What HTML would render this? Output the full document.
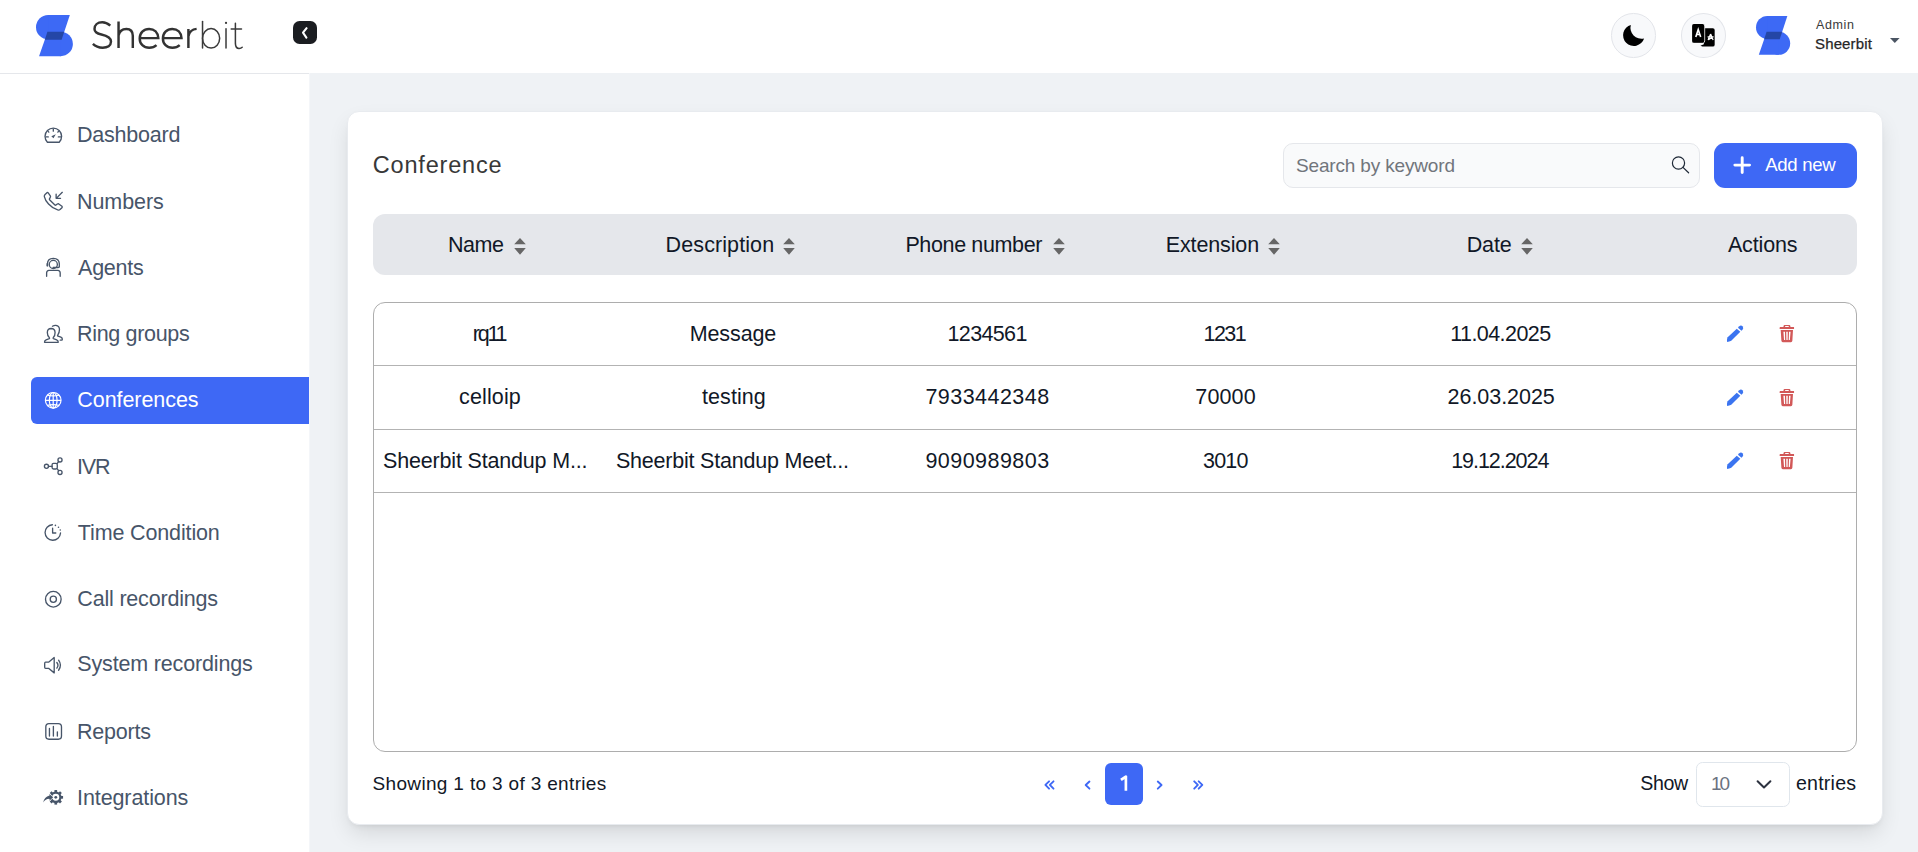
<!DOCTYPE html>
<html><head><meta charset="utf-8"><style>
*{box-sizing:border-box;margin:0;padding:0}
html,body{width:1918px;height:852px;overflow:hidden;background:#eff2f5;font-family:"Liberation Sans",sans-serif}
.a{position:absolute;display:block;overflow:visible}
.t{position:absolute;white-space:nowrap}
.b{position:absolute}
</style></head><body>
<div class="b" style="left:0;top:0;width:1918px;height:73px;background:#fff"></div>
<div class="b" style="left:0;top:73px;width:309px;height:779px;background:#fff;border-top:1px solid #e5e7eb"></div>
<div class="b" style="left:309px;top:73px;width:1px;height:779px;background:#f4f6f9"></div>
<div class="b" style="left:31px;top:377px;width:278px;height:46.6px;background:#3e68f5;border-radius:6px 0 0 6px"></div>
<svg class="a" style="left:36.1px;top:15.2px;width:36.9px;height:41.2px" viewBox="100 85 605 675" preserveAspectRatio="none"><circle cx="300" cy="285" r="200" fill="#3d69f5"/><polygon points="300,85 655,85 520,490 300,490" fill="#3d69f5"/>
<circle cx="505" cy="560" r="200" fill="#3d69f5"/><polygon points="290,360 505,360 505,760 150,760" fill="#3d69f5"/>
<polygon points="287,360 563,360 520,490 245,490" fill="#2446a6"/></svg>
<svg class="a" style="left:1755.8px;top:15.8px;width:34.2px;height:38.8px" viewBox="100 85 605 675" preserveAspectRatio="none"><circle cx="300" cy="285" r="200" fill="#3d69f5"/><polygon points="300,85 655,85 520,490 300,490" fill="#3d69f5"/>
<circle cx="505" cy="560" r="200" fill="#3d69f5"/><polygon points="290,360 505,360 505,760 150,760" fill="#3d69f5"/>
<polygon points="287,360 563,360 520,490 245,490" fill="#2446a6"/></svg>
<svg class="a" style="left:88px;top:16px;width:112px;height:38px" viewBox="88 16 112 38"><g fill="none" stroke="#333" stroke-width="2.45"><path d="M110.3,25.6 C107.5,23.2 104.8,22.2 102.3,22.2 C97.5,22.2 94.5,25 94.5,28.9 C94.5,32.6 97.6,33.6 101.4,34.5 C106.2,35.6 111,37.2 111,41.6 C111,45.6 107.5,47.7 102.7,47.7 C98.6,47.7 95.2,46.2 92.9,43.9"/><path d="M118.55,21.6 V47.9 M118.55,35.5 C119.3,31.3 122.5,28.9 126.4,28.9 C130.6,28.9 132.8,31.6 132.8,35.8 V47.9"/><path d="M139.9,38.1 H158.3 C158,32.6 154.4,28.9 149.1,28.9 C143.6,28.9 139.7,33 139.7,38.4 C139.7,44 143.6,47.8 149.2,47.8 C152.3,47.8 154.8,46.8 156.5,45.2"/><path d="M163.1,38.1 H181.5 C181.2,32.6 177.6,28.9 172.3,28.9 C166.8,28.9 162.9,33 162.9,38.4 C162.9,44 166.8,47.8 172.4,47.8 C175.5,47.8 178,46.8 179.7,45.2"/><path d="M188.4,28.9 V47.9 M188.4,36.2 C189.4,31.6 192.4,29.3 196.6,28.9"/></g></svg>
<svg class="a" style="left:180px;top:15px;width:70px;height:40px;" viewBox="0 0 1491 852"><g fill="none" stroke="#3a3a3a" stroke-width="32" stroke-linecap="round"><path d="M480,140 V705"/><ellipse cx="662" cy="497" rx="183" ry="208"/><path d="M980,295 V705"/><path d="M1180,175 V610 Q1185,715 1260,712 Q1300,710 1325,688"/><path d="M1090,300 H1310"/></g><circle cx="980" cy="168" r="24" fill="#3a3a3a"/></svg>
<div class="b" style="left:292.9px;top:20.9px;width:24px;height:23.4px;background:#1b1d21;border-radius:6.5px"></div>
<svg class="a" style="left:292px;top:20px;width:25px;height:25px;" viewBox="0 0 25 25"><path d="M14.6,8.2 L11,12.7 L14.4,17.6" fill="none" stroke="#fff" stroke-width="2.1" stroke-linecap="round" stroke-linejoin="round"/></svg>
<div class="b" style="left:1611.4px;top:13.1px;width:44.6px;height:44.6px;border-radius:50%;background:#f8f9fb;border:1px solid #e3e5ea"></div>
<div class="b" style="left:1681.1px;top:13.1px;width:45.2px;height:44.6px;border-radius:50%;background:#f8f9fb;border:1px solid #e3e5ea"></div>
<svg class="a" style="left:1608px;top:10px;width:120px;height:50px;" viewBox="0 0 1918 799"><path d="M365,238 A172,172 0 1,0 577,455 A176,176 0 0,1 365,238 Z" fill="#000"/><path d="M1538,290 H1675 Q1705,290 1705,320 V555 Q1705,585 1675,585 H1545 L1510,585 L1478,572 L1532,548 Z" fill="#000"/><rect x="1345" y="225" width="200" height="300" rx="30" fill="#000" stroke="#fff" stroke-width="14"/><rect x="1345" y="225" width="192" height="300" rx="30" fill="#000"/><path d="M1403,430 L1442,312 L1481,430 M1418,392 H1466" fill="none" stroke="#fff" stroke-width="26"/><path d="M1640,385 L1600,478 M1640,385 L1680,478 M1592,430 H1688 M1605,475 L1680,428" stroke="#fff" stroke-width="20" fill="none"/></svg>
<svg class="a" style="left:1889px;top:37px;width:12px;height:7px;" viewBox="0 0 12 7"><path d="M1,0.9 H10.6 L5.8,5.9 Z" fill="#4b5563"/></svg>
<div class="b" style="left:347px;top:110.6px;width:1535.9px;height:714.6px;background:#fff;border-radius:12px;border:1px solid #e8ebef;box-shadow:0 10px 22px -3px rgba(0,0,0,0.12),0 4px 6px -4px rgba(0,0,0,0.1)"></div>
<div class="b" style="left:1283.3px;top:143.3px;width:417.2px;height:44.6px;background:#f9fafb;border:1px solid #e5e7eb;border-radius:10px"></div>
<svg class="a" style="left:1668px;top:152px;width:24px;height:24px;" viewBox="0 0 24 24"><g fill="none" stroke="#1f2937" stroke-width="1.2" stroke-linecap="round"><circle cx="10.5" cy="11" r="6.1"/><path d="M15,15.4 L20.6,20.8"/></g></svg>
<div class="b" style="left:1713.8px;top:143.3px;width:142.9px;height:44.6px;background:#3e68f5;border-radius:11px"></div>
<svg class="a" style="left:1730px;top:152px;width:26px;height:26px;" viewBox="0 0 26 26"><path d="M12.2,5.75 V20.45 M4.85,13.1 H19.55" stroke="#fff" stroke-width="2.9" stroke-linecap="round"/></svg>
<div class="b" style="left:373px;top:214px;width:1484px;height:60.5px;background:#e5e7eb;border-radius:12px"></div>
<svg class="a" style="left:513.5px;top:236px;width:12px;height:20px;" viewBox="0 0 12 20"><path d="M0.2,8.3 L6,2 L11.8,8.3 Z M0.2,11.9 L6,18.7 L11.8,11.9 Z" fill="#666"/></svg>
<svg class="a" style="left:783.4px;top:236px;width:12px;height:20px;" viewBox="0 0 12 20"><path d="M0.2,8.3 L6,2 L11.8,8.3 Z M0.2,11.9 L6,18.7 L11.8,11.9 Z" fill="#666"/></svg>
<svg class="a" style="left:1053px;top:236px;width:12px;height:20px;" viewBox="0 0 12 20"><path d="M0.2,8.3 L6,2 L11.8,8.3 Z M0.2,11.9 L6,18.7 L11.8,11.9 Z" fill="#666"/></svg>
<svg class="a" style="left:1268.4px;top:236px;width:12px;height:20px;" viewBox="0 0 12 20"><path d="M0.2,8.3 L6,2 L11.8,8.3 Z M0.2,11.9 L6,18.7 L11.8,11.9 Z" fill="#666"/></svg>
<svg class="a" style="left:1521.1px;top:236px;width:12px;height:20px;" viewBox="0 0 12 20"><path d="M0.2,8.3 L6,2 L11.8,8.3 Z M0.2,11.9 L6,18.7 L11.8,11.9 Z" fill="#666"/></svg>
<div class="b" style="left:373.2px;top:301.8px;width:1484px;height:450.5px;border:1px solid #adadad;border-radius:12px"></div>
<div class="b" style="left:374px;top:364.8px;width:1482px;height:1px;background:#b3b3b3"></div>
<div class="b" style="left:374px;top:428.8px;width:1482px;height:1px;background:#b3b3b3"></div>
<div class="b" style="left:374px;top:492.3px;width:1482px;height:1px;background:#b3b3b3"></div>
<svg class="a" style="left:1720px;top:318px;width:80px;height:32px;" viewBox="0 0 1918 767"><g fill="#3b74f0"><path d="M178,468 L402,255 L487,332 L270,548 Q225,572 170,578 Q160,525 178,468 Z"/><path d="M430,232 L515,308 L540,283 Q572,248 545,205 Q505,160 462,195 Z"/></g><g fill="#d25858"><path d="M1545,165 H1665 Q1690,168 1690,215 H1770 Q1780,220 1775,262 H1430 Q1425,220 1440,215 H1520 Q1520,168 1545,165 Z M1562,190 V215 H1648 V190 Z" fill-rule="evenodd"/><path d="M1455,290 H1750 L1735,545 Q1732,580 1700,580 H1505 Q1475,580 1472,545 Z M1520,330 H1558 L1562,525 H1535 Z M1588,330 H1625 L1622,525 H1592 Z M1655,330 H1692 L1675,525 H1648 Z" fill-rule="evenodd"/></g></svg>
<svg class="a" style="left:1720px;top:382px;width:80px;height:32px;" viewBox="0 0 1918 767"><g fill="#3b74f0"><path d="M178,468 L402,255 L487,332 L270,548 Q225,572 170,578 Q160,525 178,468 Z"/><path d="M430,232 L515,308 L540,283 Q572,248 545,205 Q505,160 462,195 Z"/></g><g fill="#d25858"><path d="M1545,165 H1665 Q1690,168 1690,215 H1770 Q1780,220 1775,262 H1430 Q1425,220 1440,215 H1520 Q1520,168 1545,165 Z M1562,190 V215 H1648 V190 Z" fill-rule="evenodd"/><path d="M1455,290 H1750 L1735,545 Q1732,580 1700,580 H1505 Q1475,580 1472,545 Z M1520,330 H1558 L1562,525 H1535 Z M1588,330 H1625 L1622,525 H1592 Z M1655,330 H1692 L1675,525 H1648 Z" fill-rule="evenodd"/></g></svg>
<svg class="a" style="left:1720px;top:445px;width:80px;height:32px;" viewBox="0 0 1918 767"><g fill="#3b74f0"><path d="M178,468 L402,255 L487,332 L270,548 Q225,572 170,578 Q160,525 178,468 Z"/><path d="M430,232 L515,308 L540,283 Q572,248 545,205 Q505,160 462,195 Z"/></g><g fill="#d25858"><path d="M1545,165 H1665 Q1690,168 1690,215 H1770 Q1780,220 1775,262 H1430 Q1425,220 1440,215 H1520 Q1520,168 1545,165 Z M1562,190 V215 H1648 V190 Z" fill-rule="evenodd"/><path d="M1455,290 H1750 L1735,545 Q1732,580 1700,580 H1505 Q1475,580 1472,545 Z M1520,330 H1558 L1562,525 H1535 Z M1588,330 H1625 L1622,525 H1592 Z M1655,330 H1692 L1675,525 H1648 Z" fill-rule="evenodd"/></g></svg>
<div class="b" style="left:1105px;top:762.9px;width:38px;height:42.1px;background:#3e68f5;border-radius:6px"></div>
<svg class="a" style="left:1030px;top:755px;width:190px;height:60px;" viewBox="0 0 1918 606"><g fill="none" stroke="#3e68f5" stroke-width="19" stroke-linecap="round" stroke-linejoin="round"><path d="M192,266 L155,302 L192,340 M237,266 L200,302 L237,340"/><path d="M600,268 L562,303 L600,340"/><path d="M1290,268 L1328,303 L1290,340"/><path d="M1658,266 L1695,302 L1658,340 M1703,266 L1740,302 L1703,340"/></g><path d="M918,252 L968,218 V360" fill="none" stroke="#fff" stroke-width="27" stroke-linejoin="round"/></svg>
<div class="b" style="left:1696.2px;top:762.2px;width:94px;height:45px;background:#fff;border:1px solid #e0e6ec;border-radius:6.5px"></div>
<svg class="a" style="left:1754px;top:776px;width:20px;height:16px;" viewBox="0 0 20 16"><path d="M3.6,5.2 L10,11.5 L16.4,5.2" fill="none" stroke="#2d3340" stroke-width="2" stroke-linecap="round" stroke-linejoin="round"/></svg>
<svg class="a" style="left:38px;top:120px;width:30px;height:30px;" viewBox="0 0 852 852"><g fill="none" stroke="#475569" stroke-width="38" stroke-linecap="round" stroke-linejoin="round"><path d="M267,631 A236,236 0 1,1 603,631 Z"/><path d="M435,258 V318 M228,480 H292 M578,480 H642 M288,322 L306,344 M582,322 L564,344"/></g><path d="M378,462 L505,402 L440,520 Z" fill="#475569"/></svg>
<svg class="a" style="left:38px;top:186px;width:30px;height:30px;" viewBox="0 0 852 852"><g fill="none" stroke="#475569" stroke-width="38" stroke-linecap="round" stroke-linejoin="round"><path d="M200,240 L255,190 Q275,178 290,198 L350,280 Q365,305 345,330 L325,365 Q318,385 335,400 L480,540 Q495,552 515,535 L550,512 Q570,500 590,510 L680,575 Q700,595 680,615 L625,670 Q600,690 560,680 Q420,640 300,510 Q200,400 180,300 Q175,265 200,240 Z"/><path d="M690,180 L525,345 M515,235 V350 H640"/></g></svg>
<svg class="a" style="left:38px;top:252px;width:30px;height:30px;" viewBox="0 0 852 852"><g fill="none" stroke="#475569" stroke-width="38" stroke-linecap="round" stroke-linejoin="round" stroke-width="34"><circle cx="435" cy="355" r="115"/><path d="M270,395 V330 Q270,185 435,180 Q600,185 605,330 V420 Q600,440 560,440 H430"/><path d="M245,690 V590 Q250,525 310,520 H565 Q625,525 630,590 V690"/></g><rect x="232" y="318" width="50" height="90" rx="10" fill="#475569" opacity="0.6"/></svg>
<svg class="a" style="left:38px;top:318px;width:30px;height:30px;" viewBox="0 0 852 852"><g fill="none" stroke="#475569" stroke-width="38" stroke-linecap="round" stroke-linejoin="round" stroke-width="34"><path d="M185,690 Q180,640 230,620 L320,585 Q335,575 320,555 Q265,505 265,410 Q265,300 375,298 Q480,300 485,410 Q485,505 435,555 Q420,575 440,585 L530,620 Q580,640 575,690 Z"/><path d="M410,235 Q460,205 510,210 Q610,225 610,330 Q610,420 560,485 Q545,505 570,515 L650,545 Q700,570 690,615 Q680,635 630,628"/></g></svg>
<svg class="a" style="left:38px;top:385px;width:30px;height:30px;" viewBox="0 0 852 852"><g fill="none" stroke="#fff" stroke-width="34"><circle cx="432" cy="435" r="222"/><path d="M210,435 H654 M432,213 V657"/><ellipse cx="432" cy="435" rx="110" ry="222"/><path d="M265,290 Q432,330 600,290 M265,580 Q432,540 600,580"/></g></svg>
<svg class="a" style="left:38px;top:451px;width:30px;height:30px;" viewBox="0 0 852 852"><g fill="none" stroke="#475569" stroke-width="38" stroke-linecap="round" stroke-linejoin="round" stroke-width="40"><circle cx="240" cy="435" r="58"/><rect x="400" y="350" width="148" height="160" rx="40"/><circle cx="625" cy="255" r="58"/><circle cx="625" cy="610" r="58"/><path d="M298,435 H400 M548,350 L585,300 M548,510 L585,560"/></g></svg>
<svg class="a" style="left:38px;top:517px;width:30px;height:30px;" viewBox="0 0 852 852"><g fill="none" stroke="#475569" stroke-width="38" stroke-linecap="round" stroke-linejoin="round" stroke-width="40"><path d="M408,220 A220,220 0 1,0 640,455"/><path d="M415,320 V455 H505"/></g><circle cx="495" cy="238" r="22" fill="#475569"/><circle cx="582" cy="290" r="22" fill="#475569"/><circle cx="632" cy="368" r="22" fill="#475569"/></svg>
<svg class="a" style="left:38px;top:583px;width:30px;height:30px;" viewBox="0 0 852 852"><g fill="none" stroke="#475569" stroke-width="38" stroke-linecap="round" stroke-linejoin="round" stroke-width="38"><circle cx="435" cy="462" r="222"/><circle cx="435" cy="462" r="88"/></g></svg>
<svg class="a" style="left:38px;top:650px;width:30px;height:30px;" viewBox="0 0 852 852"><g fill="none" stroke="#475569" stroke-width="38" stroke-linecap="round" stroke-linejoin="round" stroke-width="38"><path d="M460,215 V650 L300,520 H215 Q190,520 190,490 V380 Q190,345 215,345 H300 Z"/><path d="M535,355 Q600,435 535,515 M585,290 Q690,435 585,575"/></g></svg>
<svg class="a" style="left:38px;top:716px;width:30px;height:30px;" viewBox="0 0 852 852"><g fill="none" stroke="#475569" stroke-width="38" stroke-linecap="round" stroke-linejoin="round" stroke-width="38"><rect x="222" y="215" width="445" height="445" rx="90"/><path d="M325,355 V570 M437,298 V570 M550,450 V570"/></g></svg>
<svg class="a" style="left:38px;top:782px;width:30px;height:30px;" viewBox="0 0 852 852"><g fill="#475569"><rect x="467" y="228" width="76" height="70" transform="rotate(0 505 435)"/><rect x="467" y="228" width="76" height="70" transform="rotate(45 505 435)"/><rect x="467" y="228" width="76" height="70" transform="rotate(90 505 435)"/><rect x="467" y="228" width="76" height="70" transform="rotate(135 505 435)"/><rect x="467" y="228" width="76" height="70" transform="rotate(180 505 435)"/><rect x="467" y="228" width="76" height="70" transform="rotate(225 505 435)"/><rect x="467" y="228" width="76" height="70" transform="rotate(270 505 435)"/><rect x="467" y="228" width="76" height="70" transform="rotate(315 505 435)"/></g><circle cx="505" cy="435" r="132" fill="none" stroke="#475569" stroke-width="66"/><circle cx="505" cy="435" r="40" fill="#475569"/><path d="M150,585 Q175,420 330,385 L320,340 L430,435 L325,530 L330,480 Q220,470 150,585 Z" fill="#475569" stroke="#fff" stroke-width="34" stroke-linejoin="round"/><path d="M150,585 Q175,420 330,385 L320,340 L430,435 L325,530 L330,480 Q220,470 150,585 Z" fill="#475569"/></svg>
<div class="t" style="left:77.00px;top:125.30px;font-size:21.5px;line-height:21.5px;font-weight:400;letter-spacing:-0.225px;color:#475569;">Dashboard</div>
<div class="t" style="left:77.00px;top:191.80px;font-size:21.5px;line-height:21.5px;font-weight:400;letter-spacing:-0.067px;color:#475569;">Numbers</div>
<div class="t" style="left:78.10px;top:258.00px;font-size:21.5px;line-height:21.5px;font-weight:400;letter-spacing:-0.28px;color:#475569;">Agents</div>
<div class="t" style="left:77.00px;top:323.90px;font-size:21.5px;line-height:21.5px;font-weight:400;letter-spacing:-0.32px;color:#475569;">Ring groups</div>
<div class="t" style="left:77.30px;top:390.00px;font-size:21.5px;line-height:21.5px;font-weight:400;letter-spacing:-0.06px;color:#ffffff;">Conferences</div>
<div class="t" style="left:77.00px;top:456.90px;font-size:21.5px;line-height:21.5px;font-weight:400;letter-spacing:-1.2px;color:#475569;">IVR</div>
<div class="t" style="left:77.80px;top:523.10px;font-size:21.5px;line-height:21.5px;font-weight:400;letter-spacing:-0.138px;color:#475569;">Time Condition</div>
<div class="t" style="left:77.30px;top:588.80px;font-size:21.5px;line-height:21.5px;font-weight:400;letter-spacing:-0.186px;color:#475569;">Call recordings</div>
<div class="t" style="left:77.30px;top:654.10px;font-size:21.5px;line-height:21.5px;font-weight:400;letter-spacing:-0.163px;color:#475569;">System recordings</div>
<div class="t" style="left:77.00px;top:721.90px;font-size:21.5px;line-height:21.5px;font-weight:400;letter-spacing:-0.234px;color:#475569;">Reports</div>
<div class="t" style="left:77.00px;top:788.00px;font-size:21.5px;line-height:21.5px;font-weight:400;letter-spacing:-0.091px;color:#475569;">Integrations</div>
<div class="t" style="left:1816.00px;top:18.50px;font-size:12.5px;line-height:12.5px;font-weight:400;letter-spacing:0.625px;color:#3a3a3a;">Admin</div>
<div class="t" style="left:1815.00px;top:35.75px;font-size:15px;line-height:15px;font-weight:400;letter-spacing:0.143px;color:#262626;-webkit-text-stroke:0.25px #262626;">Sheerbit</div>
<div class="t" style="left:372.75px;top:153.90px;font-size:23.5px;line-height:23.5px;font-weight:400;letter-spacing:0.811px;color:#383838;">Conference</div>
<div class="t" style="left:1296.00px;top:156.00px;font-size:19px;line-height:19px;font-weight:400;letter-spacing:-0.162px;color:#71757c;">Search by keyword</div>
<div class="t" style="left:1765.30px;top:155.90px;font-size:18.6px;line-height:18.6px;font-weight:400;letter-spacing:-0.35px;color:#ffffff;">Add new</div>
<div class="t" style="left:447.90px;top:234.85px;font-size:21.5px;line-height:21.5px;font-weight:400;letter-spacing:-0.4px;color:#111827;">Name</div>
<div class="t" style="left:665.60px;top:234.85px;font-size:21.5px;line-height:21.5px;font-weight:400;letter-spacing:0.1px;color:#111827;">Description</div>
<div class="t" style="left:905.40px;top:234.85px;font-size:21.5px;line-height:21.5px;font-weight:400;letter-spacing:-0.363px;color:#111827;">Phone number</div>
<div class="t" style="left:1165.70px;top:234.85px;font-size:21.5px;line-height:21.5px;font-weight:400;letter-spacing:-0.125px;color:#111827;">Extension</div>
<div class="t" style="left:1466.70px;top:234.85px;font-size:21.5px;line-height:21.5px;font-weight:400;letter-spacing:-0.133px;color:#111827;">Date</div>
<div class="t" style="left:1727.90px;top:234.85px;font-size:21.5px;line-height:21.5px;font-weight:400;letter-spacing:-0.133px;color:#111827;">Actions</div>
<div class="t" style="left:472.70px;top:324.00px;font-size:21.5px;line-height:21.5px;font-weight:400;letter-spacing:-2.2px;color:#111827;">rq11</div>
<div class="t" style="left:689.70px;top:324.00px;font-size:21.5px;line-height:21.5px;font-weight:400;letter-spacing:-0.1px;color:#111827;">Message</div>
<div class="t" style="left:947.50px;top:324.00px;font-size:21.5px;line-height:21.5px;font-weight:400;letter-spacing:-0.633px;color:#111827;">1234561</div>
<div class="t" style="left:1203.40px;top:324.00px;font-size:21.5px;line-height:21.5px;font-weight:400;letter-spacing:-1.467px;color:#111827;">1231</div>
<div class="t" style="left:1450.20px;top:324.00px;font-size:21.5px;line-height:21.5px;font-weight:400;letter-spacing:-0.556px;color:#111827;">11.04.2025</div>
<div class="t" style="left:459.00px;top:386.80px;font-size:21.5px;line-height:21.5px;font-weight:400;letter-spacing:0.133px;color:#111827;">celloip</div>
<div class="t" style="left:702.00px;top:386.80px;font-size:21.5px;line-height:21.5px;font-weight:400;letter-spacing:0.066px;color:#111827;">testing</div>
<div class="t" style="left:925.40px;top:386.80px;font-size:21.5px;line-height:21.5px;font-weight:400;letter-spacing:0.467px;color:#111827;">7933442348</div>
<div class="t" style="left:1195.30px;top:386.80px;font-size:21.5px;line-height:21.5px;font-weight:400;letter-spacing:0.15px;color:#111827;">70000</div>
<div class="t" style="left:1447.60px;top:386.80px;font-size:21.5px;line-height:21.5px;font-weight:400;letter-spacing:-0.044px;color:#111827;">26.03.2025</div>
<div class="t" style="left:383.10px;top:450.90px;font-size:21.5px;line-height:21.5px;font-weight:400;letter-spacing:-0.18px;color:#111827;">Sheerbit Standup M...</div>
<div class="t" style="left:615.90px;top:450.90px;font-size:21.5px;line-height:21.5px;font-weight:400;letter-spacing:-0.208px;color:#111827;">Sheerbit Standup Meet...</div>
<div class="t" style="left:925.40px;top:450.90px;font-size:21.5px;line-height:21.5px;font-weight:400;letter-spacing:0.467px;color:#111827;">9090989803</div>
<div class="t" style="left:1203.00px;top:450.90px;font-size:21.5px;line-height:21.5px;font-weight:400;letter-spacing:-0.8px;color:#111827;">3010</div>
<div class="t" style="left:1451.20px;top:450.90px;font-size:21.5px;line-height:21.5px;font-weight:400;letter-spacing:-1.045px;color:#111827;">19.12.2024</div>
<div class="t" style="left:372.50px;top:773.50px;font-size:19px;line-height:19px;font-weight:400;letter-spacing:0.338px;color:#111827;">Showing 1 to 3 of 3 entries</div>
<div class="t" style="left:1640.25px;top:773.75px;font-size:19.6px;line-height:19.6px;font-weight:400;letter-spacing:-0.334px;color:#111827;">Show</div>
<div class="t" style="left:1710.90px;top:773.75px;font-size:19px;line-height:19px;font-weight:400;letter-spacing:-2.0px;color:#6b7280;">10</div>
<div class="t" style="left:1795.90px;top:773.75px;font-size:19.6px;line-height:19.6px;font-weight:400;letter-spacing:0.233px;color:#111827;">entries</div>
</body></html>
